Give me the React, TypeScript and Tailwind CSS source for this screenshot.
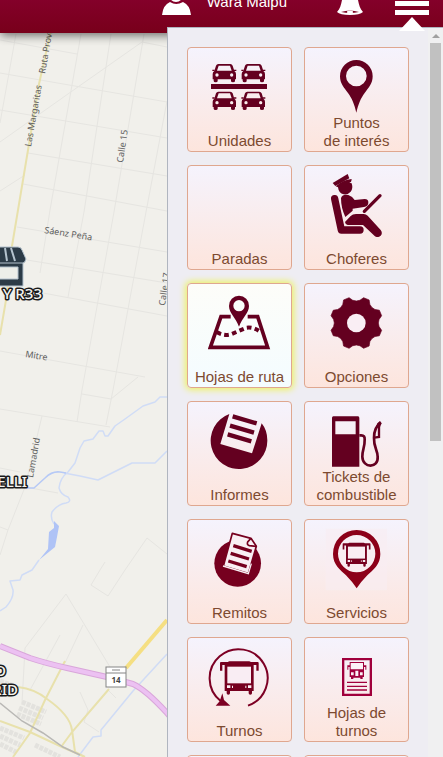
import { ReactNode } from "react";

const WINE = "#640020";

const Car = ({ x, y }: { x: number; y: number }) => (
  <g transform={`translate(${x} ${y})`} fill={WINE}>
    <path
      fillRule="evenodd"
      d="M18 0h36q5 0 7 5l5 16q5 3 5 9v16h-3v5q0 4-6 4t-6-4v-5H16v5q0 4-6 4t-6-4v-5H1V30q0-6 5-9l5-16q2-5 7-5zM19 5l-5 15h44L53 5zM14 28a5 5 0 1 0 0 10 5 5 0 0 0 0-10zM58 28a5 5 0 1 0 0 10 5 5 0 0 0 0-10z"
    />
    <path d="M0 17h7v4H0zM65 17h7v4h-7z" />
  </g>
);

const Bus = ({ transform, color }: { transform: string; color: string }) => (
  <g transform={transform} fill={color}>
    <path d="M3 1H23L28-1H88L93 1H113Q116 1 116 4V27H109V10H101V88H96V95Q96 99 91 99T86 95V88H30V95Q30 99 25 99T20 95V88H14V10H7V27H0V4Q0 1 3 1Z" />
    <path fill="#f9edf3" d="M22 15H93V65H22Z" />
    <path fill="#f9edf3" d="M21 71h10v8H21zM84 71h10v8H84zM36 72h3v7h-3zM76 72h3v7h-3z" />
  </g>
);

const gearPoints = Array.from({ length: 8 }, (_, i) =>
  [
    [-16, 79],
    [-9, 69],
    [0, 66],
    [9, 69],
    [16, 79],
  ]
    .map(([angle, radius]) => {
      const a = ((angle + i * 45) * Math.PI) / 180;
      return `${(529 + radius * Math.sin(a)).toFixed(1)},${(141 - radius * Math.cos(a)).toFixed(1)}`;
    })
    .join(" ")
).join(" ");

type MenuItem = {
  label: string;
  viewBox: string;
  icon: ReactNode;
  active?: boolean;
};

const LEFT = "84 48 189 189";
const RIGHT = "435 48 189 189";

const items: MenuItem[] = [
  {
    label: "Unidades",
    viewBox: LEFT,
    icon: (
      <>
        <Car x={97} y={72} />
        <Car x={184} y={72} />
        <path fill={WINE} d="M93 132h168v15H93z" />
        <Car x={97} y={155} />
        <Car x={184} y={155} />
      </>
    ),
  },
  {
    label: "Puntos\nde interés",
    viewBox: RIGHT,
    icon: (
      <path
        fill={WINE}
        fillRule="evenodd"
        d="M529 60a49 49 0 0 1 49 49c0 22-12 34-24 50-12 16-19 34-25 59-6-25-13-43-25-59-12-16-24-28-24-50a49 49 0 0 1 49-49zm0 17a31 31 0 1 0 0 62 31 31 0 0 0 0-62z"
      />
    ),
  },
  { label: "Paradas", viewBox: LEFT, icon: null },
  {
    label: "Choferes",
    viewBox: RIGHT,
    icon: (
      <g fill={WINE}>
        <path d="M458 75L503 48L508 61L466 84Z" />
        <path d="M467 85Q488 66 515 63L514 69Q514 73 508 74L515 76Q520 92 512 101Q503 111 491 109Q476 106 474 88Z" />
        <path d="M483 120Q488 107 505 111Q518 115 524 126L554 123Q566 123 565 135Q564 146 552 147L518 152V158L496 177Q483 150 483 120Z" />
        <path
          d="M464 122L484 216H540"
          fill="none"
          stroke={WINE}
          strokeWidth="22"
          strokeLinecap="round"
          strokeLinejoin="round"
        />
        <path d="M495 192L512 174Q518 168 528 168H551Q558 168 563 173L602 216Q609 225 602 233Q594 241 584 234L549 201H503Q496 200 495 192Z" />
        <path d="M553 160L600 113" stroke={WINE} strokeWidth="10" strokeLinecap="round" />
      </g>
    ),
  },
  {
    label: "Hojas de ruta",
    viewBox: LEFT,
    active: true,
    icon: (
      <>
        <path
          d="M152 122H123L91 214H263L233 122H203"
          fill="none"
          stroke={WINE}
          strokeWidth="11"
        />
        <path
          fill={WINE}
          fillRule="evenodd"
          d="M177 59a30 30 0 0 1 30 31c0 22-20 34-30 62-10-28-30-40-30-62a30 30 0 0 1 30-31zm0 13a17 17 0 1 0 0 34 17 17 0 0 0 0-34z"
        />
        <path
          d="M110 168Q133 182 155 174L200 155Q222 152 244 170"
          fill="none"
          stroke={WINE}
          strokeWidth="12"
          strokeDasharray="14 10"
        />
      </>
    ),
  },
  {
    label: "Opciones",
    viewBox: RIGHT,
    icon: (
      <>
        <polygon
          points={gearPoints}
          fill={WINE}
          stroke={WINE}
          strokeWidth="2"
          strokeLinejoin="round"
        />
        <circle cx="529" cy="141" r="28" fill="#f9eef4" />
      </>
    ),
  },
  {
    label: "Informes",
    viewBox: LEFT,
    icon: (
      <>
        <path
          fill={WINE}
          d="M148 60L121 150L216 178L245 88Q262 109 262 139A85 85 0 1 1 148 60Z"
        />
        <path
          d="M158 67L230 88M150 95L222 116M143 121L214 142"
          stroke={WINE}
          strokeWidth="13"
        />
      </>
    ),
  },
  {
    label: "Tickets de\ncombustible",
    viewBox: RIGHT,
    icon: (
      <>
        <path
          fill={WINE}
          fillRule="evenodd"
          d="M460 67H534Q538 67 538 72V218H456V72Q456 67 460 67ZM466 82V121H527V82Z"
        />
        <path
          d="M538 124H544Q555 124 554 137C555 160 546 170 547 188C548 224 596 224 593 188C593 168 581 160 582 132C582 110 589 95 602 86"
          fill="none"
          stroke={WINE}
          strokeWidth="8"
        />
        <path d="M597 95V129L583 131" fill="none" stroke={WINE} strokeWidth="7" />
        <path d="M592 88L600 81L605 88L600 99L588 100Z" fill={WINE} />
      </>
    ),
  },
  {
    label: "Remitos",
    viewBox: LEFT,
    icon: (
      <>
        <circle cx="173" cy="154" r="70" fill="#76001f" />
        <path
          d="M157 64L213 79L229 103L205 185L130 162Z"
          fill="#f9eff4"
          stroke="#76001f"
          strokeWidth="5"
          strokeLinejoin="round"
        />
        <path d="M129 162L205 185L214 155" fill="none" stroke="#f9eff4" strokeWidth="4" />
        <path
          d="M212 80L203 90Q200 99 208 101L229 103"
          fill="none"
          stroke="#76001f"
          strokeWidth="5"
        />
        <path
          d="M160 101L215 118M152 124L207 141M145 147L200 164"
          stroke="#76001f"
          strokeWidth="10"
        />
      </>
    ),
  },
  {
    label: "Servicios",
    viewBox: RIGHT,
    icon: (
      <>
        <path fill="#f9edf2" fillOpacity="0.6" d="M437 50h184v185H437z" />
        <path
          fill="#8c0019"
          fillRule="evenodd"
          d="M530 54a71 71 0 0 1 71 72c0 33-22 47-39 64q-18 18-32 39-14-21-32-39c-17-17-39-31-39-64a71 71 0 0 1 71-72zm0 15a56 56 0 1 0 0 112 56 56 0 0 0 0-112z"
        />
        <Bus transform="translate(488 93) scale(.72)" color="#76001f" />
      </>
    ),
  },
  {
    label: "Turnos",
    viewBox: LEFT,
    icon: (
      <>
        <path
          d="M122 213A87 87 0 1 1 204 227"
          fill="none"
          stroke="#7d0024"
          strokeWidth="6"
        />
        <path fill="#7d0024" d="M127 190L132 210L151 227H107L119 214Z" />
        <Bus transform="translate(120 95)" color="#76001f" />
      </>
    ),
  },
  {
    label: "Hojas de\nturnos",
    viewBox: RIGHT,
    icon: (
      <g fill="#a0003c">
        <path fillRule="evenodd" d="M486 84H576V198H486ZM493 91V191H569V91Z" />
        <path d="M509 96H552V106H559V119H556V111H552V141H548V147H541V143H520V147H513V141H509V111H505V119H502V106H509Z" />
        <path fill="#fbf1f6" d="M512 99H549V118H512ZM513 127h8v9h-8zM540 127h8v9h-8zM526 122h9v16h-9z" />
        <path d="M501 155h60v4h-60zM501 167h60v4h-60zM501 178h60v4h-60z" />
      </g>
    ),
  },
  { label: "", viewBox: LEFT, icon: null },
  { label: "", viewBox: RIGHT, icon: null },
];

const tileBase =
  "grid h-[105px] justify-items-center rounded border border-[#dfa78f] bg-linear-to-b text-[15px] leading-[18px] text-[#7d4a30]";

const MenuTile = ({ item }: { item: MenuItem }) => (
  <button
    type="button"
    className={
      item.active
        ? `${tileBase} from-[#fdfdf9] to-[#f4fcff] shadow-[0_0_6px_2px_#eef26a]`
        : `${tileBase} from-[#f5f3fd] to-[#fde5dd]`
    }
  >
    <svg
      viewBox={item.viewBox}
      className="col-start-1 row-start-1 mt-2 size-[63px]"
      aria-hidden="true"
    >
      {item.icon}
    </svg>
    <span className="col-start-1 row-start-1 self-end whitespace-pre-line pb-px">
      {item.label}
    </span>
  </button>
);

const RoadMap = () => (
  <svg className="absolute inset-0 h-full w-full bg-[#f1f0eb]" aria-label="Mapa">
    {/* local streets */}
    <g fill="none" stroke="#e6e5e1" strokeWidth="1">
      <path d="M16 34L0 123M81 34L50 210L40 273M111 34L84 212L68 297M144 34L114 212L82 390L77 422M167 101L146 212L113 390L106 425" />
      <path d="M0 40L77 54M0 73L167 102M0 110L167 138M28 153L167 176M23 184L167 211M17 227L167 252M27 260L167 283M43 293L167 316M0 351L145 377M138 377L111 399L82 394" />
      <path d="M0 191L25 175M0 142L75 89L142 42L167 47" />
      <path d="M0 409L110 427M42 416L25 487L8 530L0 555M0 468L20 472M25 487L58 493M0 527L8 530M125 570L147 538L167 554M100 570L105 562" />
      <path d="M22 703L25 648L66 594L110 667M83 625L65 663M100 570L91 585L108 596L125 570M30 690L60 635M80 692L88 710L84 722L99 732M108 690L116 698" />
    </g>
    {/* town blocks */}
    <g fill="none" stroke="#e3e2de" strokeWidth="5" strokeDasharray="4 1">
      <path d="M22 702L46 712M19 708L43 718M17 714L41 724M0 728L24 738M0 736L20 745M0 744L16 752M35 745L60 757M0 681L14 686" />
    </g>
    {/* water */}
    <g fill="none" stroke="#d0dcf6" strokeWidth="1.5" strokeLinejoin="round">
      <path d="M167 397H160L155 402L143 406L125 419L115 426L108 436H105L103 431H99L93 439L84 441L80 448L75 463L68 472Q60 478 59 488Q61 495 68 497Q72 502 66 503Q58 504 52 512Q50 518 54 524M39 560L32 570L22 575L20 580L10 581L13 590Q14 598 6 607L0 611" />
      <path d="M64 473L80 476L98 480L132 463H155L167 451M167 654L133 691L101 730V736L93 737L78 757" />
      <path stroke="#b6c9f6" d="M26 488H34L45 478Q52 471 60 472L66 473" />
      <path fill="#afc3f6" stroke="none" d="M54 521L59 526L57 537L55 547L39 560L48 549L49 532L54 528Z" />
    </g>
    {/* secondary roads */}
    <g fill="none" stroke="#e8e1ac" strokeWidth="2">
      <path d="M51 30L39 84L28 150L18 210L12 246L6 300L0 335" />
      <path d="M65 661L45 700L30 733L13 757M18 687Q35 689 47 699Q70 715 72 730L75 752L85 757M0 721L30 732L62 747L85 757M109 689L72 732L61 747" />
    </g>
    <path d="M0 703L22 721L43 733L63 747L80 755" fill="none" stroke="#b9b8b5" strokeWidth="1.5" />
    {/* highways */}
    <path d="M167 620L126 668" stroke="#f5df82" strokeWidth="4" />
    <g fill="none" strokeLinejoin="round">
      <path d="M0 646L30 658Q45 663 67 668L107 677L133 684Q146 690 167 713L190 740" stroke="#d9a6da" strokeWidth="6" />
      <path d="M0 646L30 658Q45 663 67 668L107 677L133 684Q146 690 167 713L190 740" stroke="#ecc1f2" strokeWidth="4" />
    </g>
    <rect x="106" y="667" width="20" height="20" fill="#fff" stroke="#858585" />
    <path d="M106 673H126M112 670H120" stroke="#858585" />
    <text x="116" y="683" textAnchor="middle" className="fill-[#444] font-['Noto_Sans'] text-[8px] font-bold">
      14
    </text>
    <g className="fill-[#5f5f5f] font-['Noto_Sans'] text-[9px]">
      <text transform="translate(31 147) rotate(-80)">Las Margaritas</text>
      <text transform="translate(45 74) rotate(-80)">Ruta Provincial</text>
      <text transform="translate(123 163) rotate(-82)">Calle 15</text>
      <text transform="translate(165 306) rotate(-82)">Calle 17</text>
      <text transform="translate(44 233) rotate(9)">Sáenz Peña</text>
      <text transform="translate(25 357) rotate(9)">Mitre</text>
      <text transform="translate(33 478) rotate(-80)">Lamadrid</text>
    </g>
    {/* shop marker */}
    <g stroke="#b5c3ce" strokeWidth="1">
      <path fill="#2c3b47" d="M-20 247H18Q21 247 22 250L26 259Q25 263 23 263V286H-20Z" />
      <path fill="#edeee9" d="M-20 267H18V279H-20Z" />
      <path fill="none" strokeWidth="2" d="M-1 248V261M5 248L7 261M11 248L15 261" />
      <path fill="none" d="M-20 263H23" />
    </g>
    <g
      textAnchor="end"
      className="fill-[#f4f4f0] stroke-[#1a1a1a] stroke-3 font-['Noto_Sans'] text-[15px] font-medium [paint-order:stroke] [stroke-linejoin:round]"
    >
      <text x="42" y="299">Y R33</text>
      <text x="27" y="487">ELLI</text>
      <text x="6" y="676">O</text>
      <text x="18" y="695">RID</text>
    </g>
  </svg>
);

const Header = () => (
  <header className="relative -mt-4 flex h-[49px] items-start justify-end bg-linear-to-b from-[#84002a] from-30% to-[#78001a] pr-[14px] pt-[5px] text-white shadow-[0_2px_10px_rgba(0,0,0,0.6)]">
    <button type="button" className="flex items-center gap-4 text-[15px] leading-[26px]">
      <svg viewBox="0 0 29 26" className="h-[26px] w-[29px]" fill="currentColor" aria-hidden="true">
        <circle cx="14" cy="6" r="7" />
        <path d="M0 26Q1 16 8 13Q14 17 21 13Q28 16 29 26Z" />
      </svg>
      <span>Wara Maipu</span>
    </button>
    <button type="button" aria-label="Notificaciones" className="ml-[50px]">
      <svg viewBox="0 0 26 26" className="size-[26px]" fill="currentColor" aria-hidden="true">
        <path d="M13 0C7 0 6 4 5 11C4 16 3 20 0 23Q3 26 13 26T26 23C23 20 22 16 21 11C20 4 19 0 13 0Z" />
        <path d="M4 23Q13 20 22 23Q13 25 4 23Z" fill="#7c001e" />
        <ellipse cx="13" cy="23" rx="3" ry="1.5" />
      </svg>
    </button>
    <button type="button" aria-label="Menú" className="ml-8">
      <svg viewBox="0 0 34 26" className="h-[26px] w-[34px]" fill="currentColor" aria-hidden="true">
        <path d="M0 3h34v5H0zM0 12h34v5H0zM0 21h34v5H0z" />
      </svg>
    </button>
  </header>
);

const MenuPanel = () => (
  <div className="absolute bottom-0 right-0 top-[27px] flex w-[276px] border-l border-t border-[#b0b5bf] bg-[#eeedf3]">
    <svg
      viewBox="0 0 26 14"
      className="absolute -top-[11px] right-[18px] h-[14px] w-[26px]"
      fill="#fff"
      aria-hidden="true"
    >
      <path d="M13 0L26 14H0Z" />
    </svg>
    <nav className="grid flex-1 auto-rows-max grid-cols-2 gap-x-3 gap-y-[13px] overflow-hidden px-[19px] pt-[19px]">
      {items.map((item, i) => (
        <MenuTile key={i} item={item} />
      ))}
    </nav>
    <div className="flex w-[15px] flex-col items-center bg-[#f0f0f1] pt-[6px]">
      <svg viewBox="0 0 8 4" className="mb-[5px] h-1 w-2" fill="#a0a0a0" aria-hidden="true">
        <path d="M4 0L8 4H0Z" />
      </svg>
      <div className="h-[55%] w-[11px] bg-[#c1c1c1]" />
    </div>
  </div>
);

const App = () => {
  return (
    <div className="relative h-screen overflow-hidden font-['Liberation_Sans',Arial,sans-serif]">
      <RoadMap />
      <Header />
      <MenuPanel />
    </div>
  );
};

export default App;
